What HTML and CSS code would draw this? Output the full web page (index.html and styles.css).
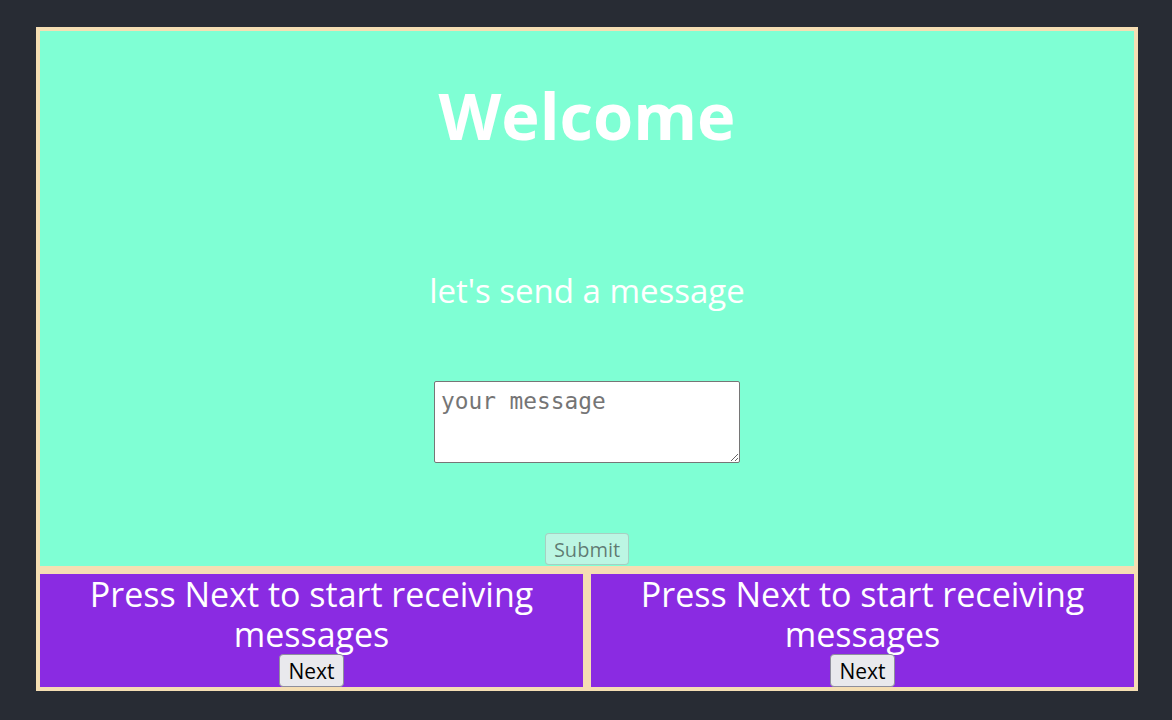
FILE: index.html
```html
<!DOCTYPE html>
<html lang="en">
<head>
<meta charset="utf-8">
<title>Messages</title>
<link rel="stylesheet" href="styles.css">
</head>
<body>
<div class="app">
  <div class="frame">
    <section class="sender">
      <h1 class="title">Welcome</h1>
      <p class="subtitle">let's send a message</p>
      <textarea class="message" placeholder="your message"></textarea>
      <button class="submit" disabled>Submit</button>
    </section>
    <section class="receiver">
      <p class="prompt">Press Next to start receiving messages</p>
      <button class="next">Next</button>
    </section>
    <section class="receiver">
      <p class="prompt">Press Next to start receiving messages</p>
      <button class="next">Next</button>
    </section>
  </div>
</div>
</body>
</html>
```

FILE: styles.css
```css
html, body {
  margin: 0;
  padding: 0;
}
body {
  background: #282c34;
  width: 1172px;
  height: 720px;
  overflow: hidden;
  font-family: "Open Sans", "DejaVu Sans", sans-serif;
}
.app {
  padding: 27px 34px 0 36px;
}
.frame {
  background: #f5deb3;
  padding: 4px;
  display: grid;
  grid-template-columns: 1fr 1fr;
  gap: 8px;
}
.sender {
  grid-column: span 2;
  height: 535px;
  background: #7fffd4;
  display: flex;
  flex-direction: column;
  align-items: center;
  color: #fff;
}
.title {
  margin: 44px 0 0;
  font-size: 65px;
  line-height: 80px;
  font-weight: 700;
}
.subtitle {
  margin: 116px 0 0;
  font-size: 33px;
  line-height: 40px;
  font-weight: 400;
}
.message {
  margin: 70px 0 0;
  width: 306px;
  height: 82px;
  box-sizing: border-box;
  border: 1px solid #767676;
  border-radius: 2px;
  background: #fff;
  padding: 5px 6px 2px;
  font-family: "DejaVu Sans Mono", monospace;
  font-size: 22.8px;
  line-height: 28px;
}
.message::placeholder {
  color: #757575;
}
.submit {
  margin-top: auto;
  margin-bottom: 1px;
  height: 32px;
  padding: 1px 8px;
  font-family: inherit;
  font-size: 20px;
  color: rgba(16, 16, 16, 0.55);
  background: rgba(239, 239, 239, 0.55);
  border: 1px solid rgba(118, 118, 118, 0.3);
  border-radius: 4px;
}
.receiver {
  background: #8a2be2;
  height: 113px;
  display: flex;
  flex-direction: column;
  align-items: center;
  color: #fff;
}
.prompt {
  margin: 0;
  font-size: 34px;
  line-height: 40px;
  text-align: center;
  padding: 0 40px;
}
.next {
  height: 33px;
  padding: 1px 8px;
  font-family: inherit;
  font-size: 21px;
  color: #000;
  background: #e9e9ed;
  border: 1px solid #8f8f9d;
  border-radius: 4px;
}
```
